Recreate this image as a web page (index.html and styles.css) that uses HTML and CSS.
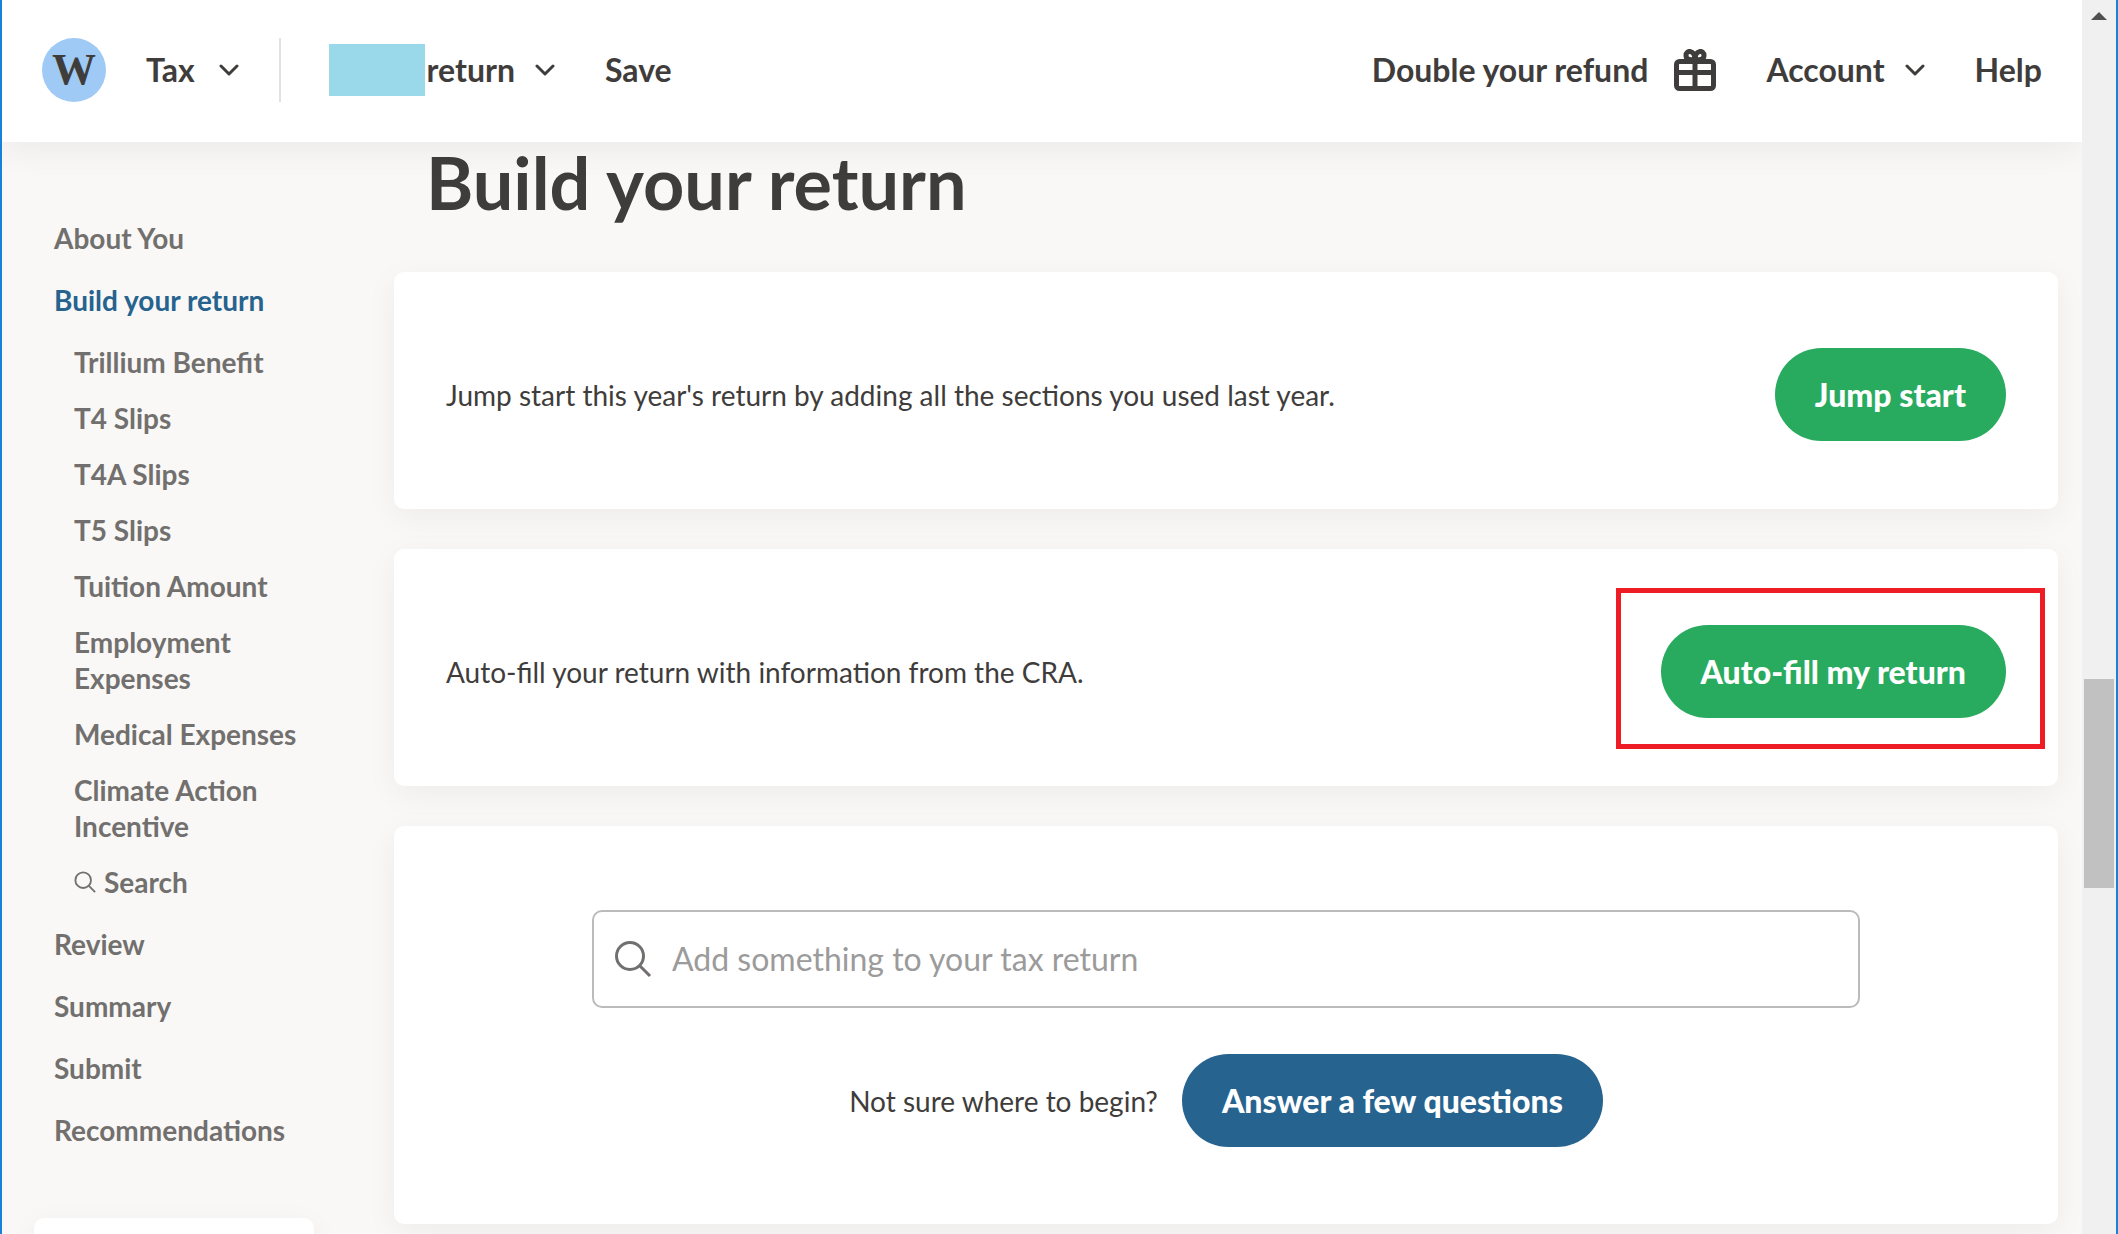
FILE: index.html
```html
<!DOCTYPE html>
<html lang="en">
<head>
<meta charset="utf-8">
<meta name="viewport" content="width=device-width, initial-scale=1">
<title>Build your return</title>
<link rel="stylesheet" href="styles.css">
</head>
<body>
<div class="window">
  <div class="app">
    <header class="topbar">
      <a class="logo" href="#" aria-label="Home">W</a>
      <button class="nav-item product" type="button">Tax
        <svg class="chevron" viewBox="0 0 20 12" aria-hidden="true"><path d="M2 2l8 8 8-8"/></svg>
      </button>
      <span class="divider"></span>
      <button class="nav-item return-menu" type="button"><span class="redacted"></span><span>return</span>
        <svg class="chevron" viewBox="0 0 20 12" aria-hidden="true"><path d="M2 2l8 8 8-8"/></svg>
      </button>
      <button class="nav-item save" type="button">Save</button>
      <a class="nav-item refund" href="#">Double your refund
        <svg class="gift" viewBox="0 0 42 42" aria-hidden="true"><rect x="2.5" y="12.5" width="37" height="27" rx="3"/><path d="M21 12v27M2 23.500h38"/><path d="M21 11c-3 0-9 .5-9-4.500 0-6 9-6 9 4.500zM21 11c3 0 9 .5 9-4.500 0-6-9-6-9 4.500z"/></svg>
      </a>
      <button class="nav-item account" type="button">Account
        <svg class="chevron" viewBox="0 0 20 12" aria-hidden="true"><path d="M2 2l8 8 8-8"/></svg>
      </button>
      <a class="nav-item help" href="#">Help</a>
    </header>
    <div class="content">
      <aside class="sidebar">
        <nav aria-label="Return sections">
          <ul class="sections">
            <li><a href="#">About You</a></li>
            <li><a class="current" href="#" aria-current="page">Build your return</a>
              <ul class="subsections">
                <li><a href="#">Trillium Benefit</a></li>
                <li><a href="#">T4 Slips</a></li>
                <li><a href="#">T4A Slips</a></li>
                <li><a href="#">T5 Slips</a></li>
                <li><a href="#">Tuition Amount</a></li>
                <li><a href="#">Employment Expenses</a></li>
                <li><a href="#">Medical Expenses</a></li>
                <li><a href="#">Climate Action Incentive</a></li>
                <li><a class="search-link" href="#"><svg class="search-small" viewBox="0 0 24 24" aria-hidden="true"><circle cx="10" cy="10" r="8.500"/><path d="M16 16l7 7"/></svg>Search</a></li>
              </ul>
            </li>
            <li><a href="#">Review</a></li>
            <li><a href="#">Summary</a></li>
            <li><a href="#">Submit</a></li>
            <li><a href="#">Recommendations</a></li>
          </ul>
        </nav>
        <div class="side-card"></div>
      </aside>
      <main class="main">
        <h1>Build your return</h1>
        <section class="card action-card">
          <p>Jump start this year's return by adding all the sections you used last year.</p>
          <button class="button" type="button">Jump start</button>
        </section>
        <section class="card action-card">
          <p>Auto-fill your return with information from the CRA.</p>
          <div class="highlighted"><button class="button" type="button">Auto-fill my return</button></div>
        </section>
        <section class="card search-card">
          <label class="search-field">
            <svg class="search-large" viewBox="0 0 38 38" aria-hidden="true"><circle cx="16" cy="16" r="13.500"/><path d="M26 26l10 10"/></svg>
            <input type="text" placeholder="Add something to your tax return" aria-label="Add something to your tax return">
          </label>
          <div class="prompt">
            <p>Not sure where to begin?</p>
            <button class="button blue" type="button">Answer a few questions</button>
          </div>
        </section>
      </main>
    </div>
  </div>
  <div class="scrollbar" aria-hidden="true">
    <svg class="scroll-up" viewBox="0 0 16 8"><path d="M0 8l8-8 8 8z"/></svg>
    <div class="thumb"></div>
  </div>
</div>
</body>
</html>
```
FILE: styles.css
```css
* { box-sizing: border-box; }

body {
  margin: 0;
  font-family: Lato, "Open Sans", sans-serif;
  font-size: 28px;
  line-height: 36px;
  color: #3f3d3b;
  background: #f9f8f6;
}

a { color: inherit; text-decoration: none; }
button, input { font: inherit; color: inherit; }
ul { list-style: none; margin: 0; padding: 0; }
p { margin: 0; }
svg { display: block; flex: none; fill: none; stroke: currentColor; }

.window {
  display: grid;
  grid-template-columns: minmax(0, 1fr) 34px;
  height: 100vh;
  overflow: hidden;
  border: solid #1982d8;
  border-width: 0 2px;
}

.app { overflow: hidden; }

/* Top bar */
.topbar {
  position: relative;
  display: flex;
  align-items: center;
  height: 142px;
  padding: 0 40px 2px;
  background: #fff;
  box-shadow: 0 8px 32px rgba(0, 0, 0, 0.06);
}

.logo {
  width: 64px;
  height: 64px;
  border-radius: 50%;
  background: #a0caf6;
  font: bold 44px/64px "Liberation Serif", serif;
  text-align: center;
}

.nav-item {
  display: flex;
  align-items: center;
  padding: 0;
  border: 0;
  background: none;
  font-size: 32px;
  font-weight: 700;
  white-space: nowrap;
}

.chevron { width: 20px; height: 12px; margin-left: 20px; stroke-width: 3; stroke-linecap: round; stroke-linejoin: round; }
.product { margin-left: 40px; }
.product .chevron { margin-left: 24px; }
.divider { width: 2px; height: 64px; margin: 0 48px 0 40px; background: #e2e2e2; }
.redacted { width: 96px; height: 52px; margin-right: 2px; background: #9ad9e9; }
.save { margin-left: 50px; }
.refund { margin-left: auto; }
.gift { width: 42px; height: 42px; margin-left: 26px; stroke-width: 5; }
.account { margin-left: 50px; }
.help { margin-left: 50px; }

/* Page columns */
.content {
  display: grid;
  grid-template-columns: 280px minmax(0, 1fr);
  gap: 80px;
  padding: 0 24px 0 32px;
}

/* Sidebar */
.sidebar {
  padding-top: 78px;
  font-weight: 700;
  color: #72706e;
}

.sections { display: grid; gap: 26px; padding-left: 20px; }
.sections a { display: block; }
.sections .current { color: #26638f; }
.subsections { display: grid; gap: 20px; padding: 26px 8px 0 20px; }
.sections .search-link { display: flex; align-items: center; gap: 8px; }
.search-small { width: 22px; height: 22px; stroke-width: 2; }

.side-card {
  height: 200px;
  margin-top: 70px;
  border-radius: 10px;
  background: #fff;
  box-shadow: 0 8px 32px rgba(0, 0, 0, 0.05);
}

/* Main column */
h1 {
  margin: 0 0 50px;
  padding-left: 32px;
  font-size: 72px;
  line-height: 80px;
}

.card {
  margin-bottom: 40px;
  border-radius: 10px;
  background: #fff;
  box-shadow: 0 8px 32px rgba(0, 0, 0, 0.05);
}

.action-card {
  display: flex;
  align-items: center;
  justify-content: space-between;
  min-height: 237px;
  padding: 8px 52px 0;
}

.button {
  height: 93px;
  padding: 0 40px;
  border: 0;
  border-radius: 47px;
  background: #28ab5f;
  color: #fff;
  font-size: 32px;
  font-weight: 900;
  white-space: nowrap;
}

.blue { background: #26638f; }

/* Red frame that calls out the button without moving it */
.highlighted { position: relative; }
.highlighted::after {
  content: "";
  position: absolute;
  inset: -37px -39px -31px -45px;
  border: 5px solid #ee1c25;
  pointer-events: none;
}

.search-card { padding: 84px 198px 77px; }

.search-field {
  display: flex;
  align-items: center;
  gap: 20px;
  height: 98px;
  padding: 0 20px;
  border: 2px solid #bbb;
  border-radius: 10px;
  font-size: 32px;
}

.search-large { width: 38px; height: 38px; stroke-width: 3; color: #72706e; }
.search-field input { flex: 1; min-width: 0; padding: 0; border: 0; outline: 0; background: none; }
.search-field input::placeholder { color: #9b9b9b; opacity: 1; }

.prompt {
  display: flex;
  align-items: center;
  justify-content: center;
  gap: 24px;
  margin-top: 46px;
}

/* Scrollbar */
.scrollbar {
  display: grid;
  grid-template-rows: 55fr 17fr 28fr;
  padding: 0 2px;
  background: #f0f0f0;
}

.scroll-up { width: 16px; height: 8px; margin: 12px auto 0; fill: #505050; stroke: none; }
.thumb { background: #c1c1c1; }
```
